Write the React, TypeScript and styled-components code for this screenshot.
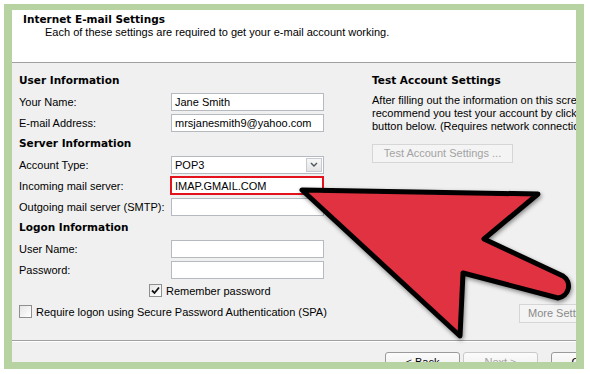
import * as React from "react";
import styled, { createGlobalStyle } from "styled-components";

const GlobalStyle = createGlobalStyle`
    html, body {
        margin: 0;
        padding: 0;
        background: #fff;
    }
    body {
        font-family: "Liberation Sans", Arial, sans-serif;
        font-size: 11px;
        color: #000;
    }
`;

const headingFont = `"DejaVu Sans", Verdana, sans-serif`;

const Page = styled.div`
    position: relative;
    width: 590px;
    height: 374px;
    overflow: hidden;
    box-sizing: border-box;
    padding: 4px 0 0 4px;
    background: #fff;
`;

const Frame = styled.div`
    width: 580px;
    height: 365px;
    box-sizing: border-box;
    border: 8px solid #b7d3a2;
    border-top-width: 6px;
    border-bottom-width: 7px;
    background: #f0f0f0;
    overflow: hidden;
    display: flex;
    flex-direction: column;
`;

const Header = styled.div`
    height: 49px;
    flex: none;
    background: #fff;
    border-bottom: 1px solid #a0a0a0;
    padding: 3px 0 0 11px;
    line-height: 13px;
    white-space: nowrap;
    & > h1{
        margin: 0;
        font-family: ${headingFont};
        font-size: 10.5px;
        font-weight: bold;
    }
    & > p{
        margin: 0 0 0 22px;
    }
`;

const Body = styled.div`
    flex: 1;
    display: flex;
    min-height: 0;
`;

const LeftColumn = styled.div`
    width: 305px;
    flex: none;
    padding: 7px 0 0 7px;
`;

const RightColumn = styled.div`
    flex: 1;
    display: flex;
    flex-direction: column;
    padding: 7px 0 0 48px;
    white-space: nowrap;
    min-width: 0;
`;

const Row = styled.div<{indent?:number}>`
    height: 21px;
    display: flex;
    align-items: center;
    padding-left: ${props=>props.indent || 0}px;
    white-space: nowrap;
`;

const SectionTitle = styled.div`
    height: 21px;
    line-height: 21px;
    font-family: ${headingFont};
    font-size: 10.5px;
    font-weight: bold;
`;

const Label = styled.span`
    width: 152px;
    flex: none;
`;

const Field = styled.div<{highlight?:boolean}>`
    width: 153px;
    height: 18px;
    box-sizing: border-box;
    background: #fff;
    border: 1px solid #b5b9c0;
    padding-left: 3px;
    line-height: 16px;
    display: flex;
    align-items: center;
    ${props=>props.highlight ? `
        width: 155px;
        height: 19px;
        margin-left: -1px;
        border: 2px solid #e3121d;
        padding-left: 3px;
    ` : ""}
`;

const SelectField = styled(Field)`
    justify-content: space-between;
    padding-right: 1px;
`;

const DropButton = styled.span`
    width: 16px;
    height: 14px;
    box-sizing: border-box;
    border: 1px solid #c7cbd1;
    background: linear-gradient(#f7f7f7, #e4e4e4);
    display: flex;
    align-items: center;
    justify-content: center;
`;

const CheckBox = styled.span`
    width: 13px;
    height: 13px;
    box-sizing: border-box;
    border: 1px solid #8e8f8f;
    background: linear-gradient(135deg, #e6e6e6, #fff);
    margin-right: 4px;
    display: flex;
    align-items: center;
    justify-content: center;
    flex: none;
`;

const Paragraph = styled.p`
    margin: 3px 0 0;
    line-height: 13px;
`;

const DialogButton = styled.div<{disabled?:boolean}>`
    box-sizing: border-box;
    height: 19px;
    border: 1px solid #d6d6d6;
    background: #f4f4f4;
    color: ${props=>props.disabled ? "#a3a3a3" : "#000"};
    line-height: 17px;
    white-space: nowrap;
    overflow: hidden;
`;

const TestButton = styled(DialogButton)`
    width: 141px;
    margin-top: 11px;
    text-align: center;
`;

const MoreButton = styled(DialogButton)`
    width: 100px;
    margin: auto 0 17px 147px;
    padding-left: 8px;
    color: #8a8a8a;
`;

const Footer = styled.div`
    height: 22px;
    flex: none;
    box-sizing: border-box;
    overflow: hidden;
    border-top: 1px solid #a0a0a0;
    box-shadow: inset 0 1px 0 #fff;
    padding: 11px 0 0 373px;
    display: flex;
    gap: 3px;
`;

const NavButton = styled.div<{disabled?:boolean, gapBefore?:number}>`
    width: 75px;
    height: 22px;
    flex: none;
    box-sizing: border-box;
    border: 1px solid ${props=>props.disabled ? "#c9c9c9" : "#9a9a9a"};
    border-radius: 3px;
    background: linear-gradient(#fbfbfb, #ececec);
    color: ${props=>props.disabled ? "#a0a0a0" : "#000"};
    text-align: center;
    line-height: 13px;
    padding-top: 3px;
    margin-left: ${props=>props.gapBefore || 0}px;
`;

const ArrowLayer = styled.svg`
    position: absolute;
    left: 0;
    top: 0;
    pointer-events: none;
`;

const Check = () => (
    <svg width="9" height="9" viewBox="0 0 9 9">
        <path d="M1 4.5 L3.5 7 L8 1.5" fill="none" stroke="#111" strokeWidth="1.8" />
    </svg>
);

const Chevron = () => (
    <svg width="8" height="5" viewBox="0 0 8 5">
        <path d="M1 1 L4 4 L7 1" fill="none" stroke="#4a5560" strokeWidth="1.4" />
    </svg>
);

const userRows = [
    { label: "Your Name:", value: "Jane Smith" },
    { label: "E-mail Address:", value: "mrsjanesmith9@yahoo.com" },
];

const logonRows = ["User Name:", "Password:"];

export default function App(){
    return(
        <>
            <GlobalStyle />
            <Page>
                <Frame>
                    <Header>
                        <h1>Internet E-mail Settings</h1>
                        <p>Each of these settings are required to get your e-mail account working.</p>
                    </Header>
                    <Body>
                        <LeftColumn>
                            <SectionTitle>User Information</SectionTitle>
                            {userRows.map((r)=>(
                                <Row key={r.label}>
                                    <Label>{r.label}</Label>
                                    <Field>{r.value}</Field>
                                </Row>
                            ))}
                            <SectionTitle>Server Information</SectionTitle>
                            <Row>
                                <Label>Account Type:</Label>
                                <SelectField>
                                    <span>POP3</span>
                                    <DropButton><Chevron /></DropButton>
                                </SelectField>
                            </Row>
                            <Row>
                                <Label>Incoming mail server:</Label>
                                <Field highlight>IMAP.GMAIL.COM</Field>
                            </Row>
                            <Row>
                                <Label>Outgoing mail server (SMTP):</Label>
                                <Field />
                            </Row>
                            <SectionTitle>Logon Information</SectionTitle>
                            {logonRows.map((l)=>(
                                <Row key={l}>
                                    <Label>{l}</Label>
                                    <Field />
                                </Row>
                            ))}
                            <Row indent={130}>
                                <CheckBox><Check /></CheckBox>
                                <span>Remember password</span>
                            </Row>
                            <Row>
                                <CheckBox />
                                <span>Require logon using Secure Password Authentication (SPA)</span>
                            </Row>
                        </LeftColumn>
                        <RightColumn>
                            <SectionTitle>Test Account Settings</SectionTitle>
                            <Paragraph>
                                After filling out the information on this screen, we<br />
                                recommend you test your account by clicking the<br />
                                button below. (Requires network connection)
                            </Paragraph>
                            <TestButton disabled>Test Account Settings ...</TestButton>
                            <MoreButton>More Settings ...</MoreButton>
                        </RightColumn>
                    </Body>
                    <Footer>
                        <NavButton>&lt; Back</NavButton>
                        <NavButton disabled>Next &gt;</NavButton>
                        <NavButton gapBefore={10}>Cancel</NavButton>
                    </Footer>
                </Frame>
                <ArrowLayer width="590" height="374" viewBox="0 0 590 374">
                    <defs>
                        <filter id="arrowShadow" x="-10%" y="-10%" width="120%" height="130%">
                            <feDropShadow dx="1" dy="2" stdDeviation="2" floodColor="#000" floodOpacity="0.45" />
                        </filter>
                    </defs>
                    <path
                        d="M302 190 L538 194 L484 239 L563 276 A12 12 0 0 1 558 298 L463 273 L460 336 Z"
                        fill="#e03141"
                        stroke="#000"
                        strokeWidth="5"
                        strokeLinejoin="round"
                        filter="url(#arrowShadow)"
                    />
                </ArrowLayer>
            </Page>
        </>
    )
}
